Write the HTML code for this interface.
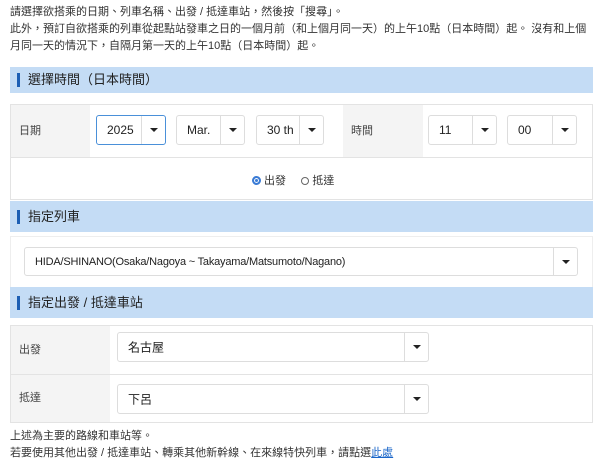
<!DOCTYPE html>
<html><head><meta charset="utf-8"><style>
*{box-sizing:border-box;margin:0;padding:0}
body{width:600px;height:466px;background:#fff;font-family:"Liberation Sans","Noto Sans CJK TC",sans-serif;color:#333;font-size:11px;position:relative;overflow:hidden}
.a{position:absolute}
.t{line-height:17px}
.h{position:absolute;left:10px;width:583px;background:#c4dcf5;font-size:13px;color:#222;padding-left:18px}
.h:before{content:"";position:absolute;left:7px;top:50%;width:3px;height:14px;margin-top:-7px;background:#1d5fb4}
.sel{position:absolute;background:#fff;border:1px solid #ddd;border-radius:3px;font-size:12px;color:#222}
.sel span{position:absolute;left:10px;top:50%;transform:translateY(-50%)}
.sel i{position:absolute;right:0;top:0;bottom:0;width:24px;border-left:1px solid #ddd}
.sel i:after{content:"";position:absolute;left:50%;top:50%;margin:-2px 0 0 -4px;border:4px solid transparent;border-top:4px solid #222;border-bottom:0}
.lab{position:absolute;background:#f4f4f4;font-size:11px;color:#444}
</style></head><body>
<div class="a t" style="left:10px;top:4px">請選擇欲搭乘的日期、列車名稱、出發 / 抵達車站，然後按「搜尋」。</div>
<div class="a t" style="left:10px;top:21px;width:585px">此外，預訂自欲搭乘的列車從起點站發車之日的一個月前（和上個月同一天）的上午10點（日本時間）起。 沒有和上個月同一天的情況下，自隔月第一天的上午10點（日本時間）起。</div>
<div class="h" style="top:67px;height:26px;line-height:26px">選擇時間（日本時間）</div>
<div class="a" style="left:10px;top:104px;width:583px;height:96px;border:1px solid #e3e3e3"></div>
<div class="a" style="left:10px;top:157px;width:583px;height:1px;background:#e3e3e3"></div>
<div class="lab" style="left:11px;top:105px;width:79px;height:52px;line-height:52px;padding-left:8px">日期</div>
<div class="lab" style="left:343px;top:105px;width:80px;height:52px;line-height:52px;padding-left:8px">時間</div>
<div class="sel" style="left:96px;top:115px;width:70px;height:30px;border-color:#4a90d9"><span>2025</span><i></i></div>
<div class="sel" style="left:176px;top:115px;width:69px;height:30px"><span>Mar.</span><i></i></div>
<div class="sel" style="left:256px;top:115px;width:68px;height:30px"><span>30 th</span><i></i></div>
<div class="sel" style="left:428px;top:115px;width:69px;height:30px"><span>11</span><i></i></div>
<div class="sel" style="left:507px;top:115px;width:70px;height:30px"><span>00</span><i></i></div>
<div class="a" style="left:252px;top:172px;font-size:11px"><span style="display:inline-block;width:9px;height:9px;border-radius:50%;border:2px solid #3a7bd5;vertical-align:-1px;box-shadow:inset 0 0 0 1px #fff;background:#3a7bd5"></span> 出發 &nbsp;&nbsp;&nbsp;&nbsp;<span style="display:inline-block;width:8px;height:8px;border-radius:50%;border:1px solid #666;vertical-align:-1px"></span> 抵達</div>
<div class="h" style="top:201px;height:31px;line-height:31px">指定列車</div>
<div class="a" style="left:10px;top:236px;width:583px;height:52px;border:1px solid #eee;border-bottom:0"></div>
<div class="sel" style="left:24px;top:247px;width:554px;height:29px;font-size:11px;letter-spacing:-0.2px"><span>HIDA/SHINANO(Osaka/Nagoya ~ Takayama/Matsumoto/Nagano)</span><i style="width:24px"></i></div>
<div class="h" style="top:287px;height:31px;line-height:31px">指定出發 / 抵達車站</div>
<div class="a" style="left:10px;top:325px;width:583px;height:98px;border:1px solid #e3e3e3"></div>
<div class="a" style="left:10px;top:374px;width:583px;height:1px;background:#e3e3e3"></div>
<div class="lab" style="left:11px;top:326px;width:99px;height:48px;line-height:48px;padding-left:8px">出發</div>
<div class="lab" style="left:11px;top:375px;width:99px;height:47px;line-height:47px;padding-left:8px">抵達</div>
<div class="sel" style="left:117px;top:332px;width:312px;height:30px"><span>名古屋</span><i></i></div>
<div class="sel" style="left:117px;top:384px;width:312px;height:30px"><span>下呂</span><i></i></div>
<div class="a t" style="left:10px;top:428px">上述為主要的路線和車站等。</div>
<div class="a t" style="left:10px;top:445px">若要使用其他出發 / 抵達車站、轉乘其他新幹線、在來線特快列車，請點選<span style="color:#1a66c9;text-decoration:underline">此處</span></div>
</body></html>
